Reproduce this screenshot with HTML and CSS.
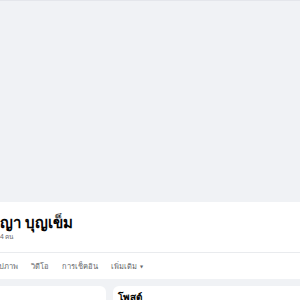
FILE: index.html
```html
<!DOCTYPE html>
<html>
  <head>
    <meta name="viewport" content="width=device-width, initial-scale=1" />
    <link rel="stylesheet" href="styles.css">
  </head>
  <body>
    <div class="cover"></div>

    <div class="info">
      <h1 class="name">ญา บุญเข็ม</h1>
      <div class="friends">4 คน</div>
    </div>

    <div class="tabs">
      <span class="tab first">รูปภาพ</span>
      <span class="tab">วิดีโอ</span>
      <span class="tab">การเช็คอิน</span>
      <span class="tab">เพิ่มเติม <span class="caret">&#9660;</span></span>
    </div>

    <div class="main">
      <div class="card side"></div>
      <div class="card feed">
        <h2 class="feed-title">โพสต์</h2>
      </div>
    </div>
  </body>
</html>
```

FILE: styles.css
```css
body {
  margin: 0;
  background: #fff;
  font-family: "Noto Sans", "DejaVu Sans", sans-serif;
  overflow: hidden;
}

* {
  box-sizing: border-box;
}

.cover {
  height: 202px;
  background: #f0f2f5;
  border-top: 1px solid #e4e6eb;
}

.info {
  height: 51px;
  padding-top: 9px;
  border-bottom: 1px solid #e9ebee;
}

.name {
  margin: 0;
  font-size: 15px;
  line-height: 22px;
  font-weight: bold;
  color: #050505;
}

.friends {
  font-size: 6.5px;
  line-height: 8px;
  color: #65676b;
}

.tabs {
  height: 26px;
  display: flex;
  align-items: center;
  gap: 13px;
  margin-left: -5px;
}

.tab {
  font-size: 7.5px;
  color: #65676b;
}

.caret {
  font-size: 4px;
  margin-left: 1px;
  vertical-align: 1px;
}

.main {
  background: #f0f2f5;
  padding-top: 7px;
  display: flex;
  gap: 7px;
  height: 40px;
  width: 340px;
}

.card {
  background: #fff;
  border-radius: 6px;
}

.side {
  width: 112px;
  margin-left: -6px;
}

.feed {
  flex: 1;
  padding: 4px 5px;
}

.feed-title {
  margin: 0;
  font-size: 10px;
  font-weight: bold;
  color: #050505;
}
```
